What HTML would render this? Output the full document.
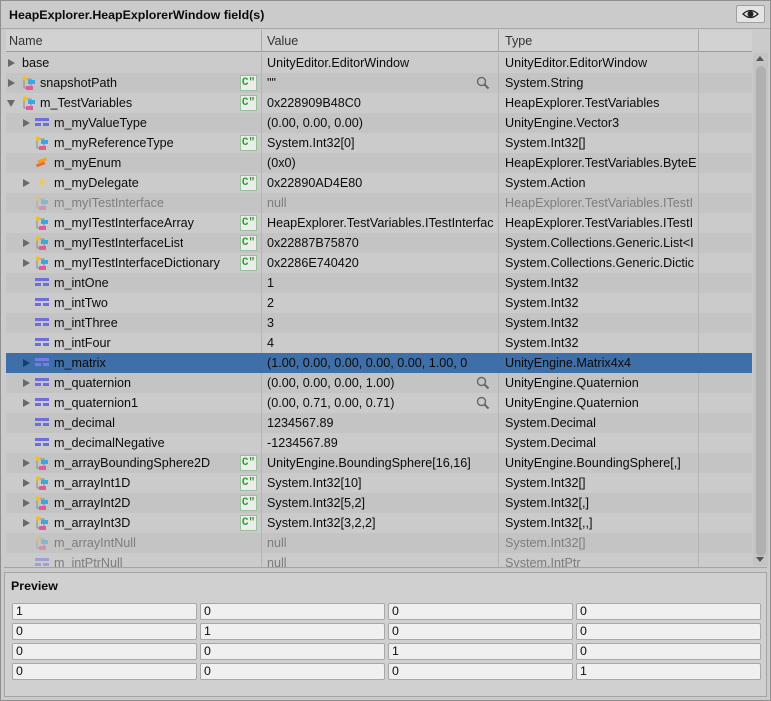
<!DOCTYPE html>
<html><head><meta charset="utf-8"><style>
*{box-sizing:border-box;margin:0;padding:0}
body{width:771px;height:701px;background:#c2c2c2;font-family:"Liberation Sans",sans-serif;font-size:12.6px;color:#0b0b0b;position:relative;overflow:hidden}
.abs{position:absolute}
#win{left:0;top:0;width:771px;height:701px;border:1px solid #8f8f8f;background:#cbcbcb}
#title{left:1px;top:1px;width:769px;height:28px;background:#cbcbcb;border-bottom:1px solid #a8a8a8}
#title span{position:absolute;left:8px;top:7px;font-weight:bold;font-size:12.4px}
#eye{left:736px;top:5px;width:29px;height:18px;background:#e4e4e4;border:1px solid #a0a0a0;border-radius:2px}
#hdr{left:6px;top:30px;width:746px;height:22px;background:#d2d2d2;border-bottom:1px solid #9a9a9a}
.hc{position:absolute;top:4px;color:#333}
.vl{position:absolute;top:0;width:1px;height:22px;background:#a8a8a8}
.row{position:absolute;left:6px;width:746px;height:20px;background:#cbcbcb}
.row.d{background:#c4c4c4}
.row.sel{background:#3e6fa8}
.row span{position:absolute;top:3px;white-space:nowrap;overflow:hidden}
.g{color:#7d7d7d}
.cl{position:absolute;top:0;width:1px;height:20px;background:#b5b5b5}
.arr{position:absolute;top:6px;width:0;height:0;border-left:7px solid #6a6a6a;border-top:4px solid transparent;border-bottom:4px solid transparent}
.dn{position:absolute;top:7px;width:0;height:0;border-top:7px solid #6a6a6a;border-left:4px solid transparent;border-right:4px solid transparent}
.ci{position:absolute;top:3px;width:14px;height:14px}
.btn{position:absolute;left:234px;top:2px;width:17px;height:16px;background:#ececec;border:1px solid #9bbf9b;color:#2c9e2c;font-weight:bold;font-size:11px;line-height:14px;text-align:center;font-family:"Liberation Mono",monospace}
.mag{position:absolute;left:470px;top:3px;width:14px;height:14px}
.val{left:261px;width:232px}.typ{left:499px;width:193px}
#sb{left:753px;top:53px;width:15px;height:513px;background:#c4c4c4}
#thumb{left:756px;top:66px;width:10px;height:490px;background:#b0b0b0;border-radius:5px}
#prev{left:4px;top:572px;width:763px;height:125px;background:#d0d0d0;border:1px solid #a4a4a4}
#prev b{position:absolute;left:6px;top:6px;font-size:12.4px}
.f{position:absolute;width:185px;height:17px;background:#f0f0f0;border:1px solid #a8a8a8;border-radius:2px;padding-left:3px;line-height:15px;font-size:12.4px}
</style></head><body>
<div id="win" class="abs"></div>
<div id="title" class="abs"><span>HeapExplorer.HeapExplorerWindow field(s)</span></div>
<div id="eye" class="abs"><svg width="27" height="16" viewBox="0 0 27 16"><path d="M6 8 Q13.5 1 21 8 Q13.5 15 6 8Z" fill="none" stroke="#222" stroke-width="1.3"/><circle cx="13.5" cy="8" r="3" fill="#222"/></svg></div>
<div id="hdr" class="abs"><span class="hc" style="left:3px">Name</span><div class="vl" style="left:255px"></div><span class="hc" style="left:261px">Value</span><div class="vl" style="left:492px"></div><span class="hc" style="left:499px">Type</span><div class="vl" style="left:692px"></div></div>

<div class="row" style="top:53px"><div class="arr" style="left:2px"></div><span style="left:16px">base</span><span class="val">UnityEditor.EditorWindow</span><span class="typ">UnityEditor.EditorWindow</span><div class="cl" style="left:255px"></div><div class="cl" style="left:492px"></div><div class="cl" style="left:692px"></div></div>
<div class="row d" style="top:73px"><div class="arr" style="left:2px"></div><svg class="ci" style="left:16px"><rect x="2" y="3" width="7" height="9" fill="none" stroke="#888" stroke-width="1"/><rect x="6" y="4" width="7" height="4" fill="#3aa7e0"/><rect x="4" y="10" width="7" height="4" fill="#e35a9a"/><circle cx="3" cy="2.5" r="2.3" fill="#f2c21b"/></svg><span style="left:34px">snapshotPath</span><div class="btn">C"</div><span class="val">""</span><svg class="mag" style="left:470px"><circle cx="5.5" cy="5.5" r="4" fill="none" stroke="#666" stroke-width="1.4"/><path d="M8.5 8.5 L12.5 12.5" stroke="#666" stroke-width="2"/></svg><span class="typ">System.String</span><div class="cl" style="left:255px"></div><div class="cl" style="left:492px"></div><div class="cl" style="left:692px"></div></div>
<div class="row" style="top:93px"><div class="dn" style="left:1px"></div><svg class="ci" style="left:16px"><rect x="2" y="3" width="7" height="9" fill="none" stroke="#888"/><rect x="6" y="4" width="7" height="4" fill="#3aa7e0"/><rect x="4" y="10" width="7" height="4" fill="#e35a9a"/><circle cx="3" cy="2.5" r="2.3" fill="#f2c21b"/></svg><span style="left:34px">m_TestVariables</span><div class="btn">C"</div><span class="val">0x228909B48C0</span><span class="typ">HeapExplorer.TestVariables</span><div class="cl" style="left:255px"></div><div class="cl" style="left:492px"></div><div class="cl" style="left:692px"></div></div>
<div class="row d" style="top:113px"><div class="arr" style="left:17px"></div><svg class="ci" style="left:29px"><rect x="0" y="2" width="14" height="3" fill="#6d6de0"/><rect x="0" y="7" width="6" height="3" fill="#6d6de0"/><rect x="8" y="7" width="6" height="3" fill="#6d6de0"/></svg><span style="left:48px">m_myValueType</span><span class="val">(0.00, 0.00, 0.00)</span><span class="typ">UnityEngine.Vector3</span><div class="cl" style="left:255px"></div><div class="cl" style="left:492px"></div><div class="cl" style="left:692px"></div></div>
<div class="row" style="top:133px"><svg class="ci" style="left:29px"><rect x="2" y="3" width="7" height="9" fill="none" stroke="#888"/><rect x="6" y="4" width="7" height="4" fill="#3aa7e0"/><rect x="4" y="10" width="7" height="4" fill="#e35a9a"/><circle cx="3" cy="2.5" r="2.3" fill="#f2c21b"/></svg><span style="left:48px">m_myReferenceType</span><div class="btn">C"</div><span class="val">System.Int32[0]</span><span class="typ">System.Int32[]</span><div class="cl" style="left:255px"></div><div class="cl" style="left:492px"></div><div class="cl" style="left:692px"></div></div>
<div class="row d" style="top:153px"><svg class="ci" style="left:29px"><rect x="3" y="3" width="9" height="3" fill="#f0a020" transform="rotate(-20 7 5)"/><rect x="1" y="7" width="9" height="3" fill="#e8702a" transform="rotate(-20 5 8)"/></svg><span style="left:48px">m_myEnum</span><span class="val">(0x0)</span><span class="typ">HeapExplorer.TestVariables.ByteE</span><div class="cl" style="left:255px"></div><div class="cl" style="left:492px"></div><div class="cl" style="left:692px"></div></div>
<div class="row" style="top:173px"><div class="arr" style="left:17px"></div><svg class="ci" style="left:29px"><path d="M7 1 L4 8 L7 8 L5 13 L10 6 L7 6 L9 1Z" fill="#f5c84a"/></svg><span style="left:48px">m_myDelegate</span><div class="btn">C"</div><span class="val">0x22890AD4E80</span><span class="typ">System.Action</span><div class="cl" style="left:255px"></div><div class="cl" style="left:492px"></div><div class="cl" style="left:692px"></div></div>
<div class="row d" style="top:193px"><svg class="ci" style="left:29px;opacity:.45"><rect x="2" y="3" width="7" height="9" fill="none" stroke="#888"/><rect x="6" y="4" width="7" height="4" fill="#3aa7e0"/><rect x="4" y="10" width="7" height="4" fill="#e35a9a"/><circle cx="3" cy="2.5" r="2.3" fill="#f2c21b"/></svg><span class="g" style="left:48px">m_myITestInterface</span><span class="val g">null</span><span class="typ g">HeapExplorer.TestVariables.ITestI</span><div class="cl" style="left:255px"></div><div class="cl" style="left:492px"></div><div class="cl" style="left:692px"></div></div>
<div class="row" style="top:213px"><svg class="ci" style="left:29px"><rect x="2" y="3" width="7" height="9" fill="none" stroke="#888"/><rect x="6" y="4" width="7" height="4" fill="#3aa7e0"/><rect x="4" y="10" width="7" height="4" fill="#e35a9a"/><circle cx="3" cy="2.5" r="2.3" fill="#f2c21b"/></svg><span style="left:48px">m_myITestInterfaceArray</span><div class="btn">C"</div><span class="val">HeapExplorer.TestVariables.ITestInterfac</span><span class="typ">HeapExplorer.TestVariables.ITestI</span><div class="cl" style="left:255px"></div><div class="cl" style="left:492px"></div><div class="cl" style="left:692px"></div></div>
<div class="row d" style="top:233px"><div class="arr" style="left:17px"></div><svg class="ci" style="left:29px"><rect x="2" y="3" width="7" height="9" fill="none" stroke="#888"/><rect x="6" y="4" width="7" height="4" fill="#3aa7e0"/><rect x="4" y="10" width="7" height="4" fill="#e35a9a"/><circle cx="3" cy="2.5" r="2.3" fill="#f2c21b"/></svg><span style="left:48px">m_myITestInterfaceList</span><div class="btn">C"</div><span class="val">0x22887B75870</span><span class="typ">System.Collections.Generic.List&lt;I</span><div class="cl" style="left:255px"></div><div class="cl" style="left:492px"></div><div class="cl" style="left:692px"></div></div>
<div class="row" style="top:253px"><div class="arr" style="left:17px"></div><svg class="ci" style="left:29px"><rect x="2" y="3" width="7" height="9" fill="none" stroke="#888"/><rect x="6" y="4" width="7" height="4" fill="#3aa7e0"/><rect x="4" y="10" width="7" height="4" fill="#e35a9a"/><circle cx="3" cy="2.5" r="2.3" fill="#f2c21b"/></svg><span style="left:48px">m_myITestInterfaceDictionary</span><div class="btn">C"</div><span class="val">0x2286E740420</span><span class="typ">System.Collections.Generic.Dictic</span><div class="cl" style="left:255px"></div><div class="cl" style="left:492px"></div><div class="cl" style="left:692px"></div></div>
<div class="row d" style="top:273px"><svg class="ci" style="left:29px"><rect x="0" y="2" width="14" height="3" fill="#6d6de0"/><rect x="0" y="7" width="6" height="3" fill="#6d6de0"/><rect x="8" y="7" width="6" height="3" fill="#6d6de0"/></svg><span style="left:48px">m_intOne</span><span class="val">1</span><span class="typ">System.Int32</span><div class="cl" style="left:255px"></div><div class="cl" style="left:492px"></div><div class="cl" style="left:692px"></div></div>
<div class="row" style="top:293px"><svg class="ci" style="left:29px"><rect x="0" y="2" width="14" height="3" fill="#6d6de0"/><rect x="0" y="7" width="6" height="3" fill="#6d6de0"/><rect x="8" y="7" width="6" height="3" fill="#6d6de0"/></svg><span style="left:48px">m_intTwo</span><span class="val">2</span><span class="typ">System.Int32</span><div class="cl" style="left:255px"></div><div class="cl" style="left:492px"></div><div class="cl" style="left:692px"></div></div>
<div class="row d" style="top:313px"><svg class="ci" style="left:29px"><rect x="0" y="2" width="14" height="3" fill="#6d6de0"/><rect x="0" y="7" width="6" height="3" fill="#6d6de0"/><rect x="8" y="7" width="6" height="3" fill="#6d6de0"/></svg><span style="left:48px">m_intThree</span><span class="val">3</span><span class="typ">System.Int32</span><div class="cl" style="left:255px"></div><div class="cl" style="left:492px"></div><div class="cl" style="left:692px"></div></div>
<div class="row" style="top:333px"><svg class="ci" style="left:29px"><rect x="0" y="2" width="14" height="3" fill="#6d6de0"/><rect x="0" y="7" width="6" height="3" fill="#6d6de0"/><rect x="8" y="7" width="6" height="3" fill="#6d6de0"/></svg><span style="left:48px">m_intFour</span><span class="val">4</span><span class="typ">System.Int32</span><div class="cl" style="left:255px"></div><div class="cl" style="left:492px"></div><div class="cl" style="left:692px"></div></div>
<div class="row sel" style="top:353px"><div class="arr" style="left:17px;border-left-color:#1d3e6a"></div><svg class="ci" style="left:29px"><rect x="0" y="2" width="14" height="3" fill="#7a7ae6"/><rect x="0" y="7" width="6" height="3" fill="#7a7ae6"/><rect x="8" y="7" width="6" height="3" fill="#7a7ae6"/></svg><span style="left:48px">m_matrix</span><span class="val">(1.00, 0.00, 0.00, 0.00, 0.00, 1.00, 0</span><span class="typ">UnityEngine.Matrix4x4</span></div>
<div class="row d" style="top:373px"><div class="arr" style="left:17px"></div><svg class="ci" style="left:29px"><rect x="0" y="2" width="14" height="3" fill="#6d6de0"/><rect x="0" y="7" width="6" height="3" fill="#6d6de0"/><rect x="8" y="7" width="6" height="3" fill="#6d6de0"/></svg><span style="left:48px">m_quaternion</span><span class="val">(0.00, 0.00, 0.00, 1.00)</span><svg class="mag"><circle cx="5.5" cy="5.5" r="4" fill="none" stroke="#666" stroke-width="1.4"/><path d="M8.5 8.5 L12.5 12.5" stroke="#666" stroke-width="2"/></svg><span class="typ">UnityEngine.Quaternion</span><div class="cl" style="left:255px"></div><div class="cl" style="left:492px"></div><div class="cl" style="left:692px"></div></div>
<div class="row" style="top:393px"><div class="arr" style="left:17px"></div><svg class="ci" style="left:29px"><rect x="0" y="2" width="14" height="3" fill="#6d6de0"/><rect x="0" y="7" width="6" height="3" fill="#6d6de0"/><rect x="8" y="7" width="6" height="3" fill="#6d6de0"/></svg><span style="left:48px">m_quaternion1</span><span class="val">(0.00, 0.71, 0.00, 0.71)</span><svg class="mag"><circle cx="5.5" cy="5.5" r="4" fill="none" stroke="#666" stroke-width="1.4"/><path d="M8.5 8.5 L12.5 12.5" stroke="#666" stroke-width="2"/></svg><span class="typ">UnityEngine.Quaternion</span><div class="cl" style="left:255px"></div><div class="cl" style="left:492px"></div><div class="cl" style="left:692px"></div></div>
<div class="row d" style="top:413px"><svg class="ci" style="left:29px"><rect x="0" y="2" width="14" height="3" fill="#6d6de0"/><rect x="0" y="7" width="6" height="3" fill="#6d6de0"/><rect x="8" y="7" width="6" height="3" fill="#6d6de0"/></svg><span style="left:48px">m_decimal</span><span class="val">1234567.89</span><span class="typ">System.Decimal</span><div class="cl" style="left:255px"></div><div class="cl" style="left:492px"></div><div class="cl" style="left:692px"></div></div>
<div class="row" style="top:433px"><svg class="ci" style="left:29px"><rect x="0" y="2" width="14" height="3" fill="#6d6de0"/><rect x="0" y="7" width="6" height="3" fill="#6d6de0"/><rect x="8" y="7" width="6" height="3" fill="#6d6de0"/></svg><span style="left:48px">m_decimalNegative</span><span class="val">-1234567.89</span><span class="typ">System.Decimal</span><div class="cl" style="left:255px"></div><div class="cl" style="left:492px"></div><div class="cl" style="left:692px"></div></div>
<div class="row d" style="top:453px"><div class="arr" style="left:17px"></div><svg class="ci" style="left:29px"><rect x="2" y="3" width="7" height="9" fill="none" stroke="#888"/><rect x="6" y="4" width="7" height="4" fill="#3aa7e0"/><rect x="4" y="10" width="7" height="4" fill="#e35a9a"/><circle cx="3" cy="2.5" r="2.3" fill="#f2c21b"/></svg><span style="left:48px">m_arrayBoundingSphere2D</span><div class="btn">C"</div><span class="val">UnityEngine.BoundingSphere[16,16]</span><span class="typ">UnityEngine.BoundingSphere[,]</span><div class="cl" style="left:255px"></div><div class="cl" style="left:492px"></div><div class="cl" style="left:692px"></div></div>
<div class="row" style="top:473px"><div class="arr" style="left:17px"></div><svg class="ci" style="left:29px"><rect x="2" y="3" width="7" height="9" fill="none" stroke="#888"/><rect x="6" y="4" width="7" height="4" fill="#3aa7e0"/><rect x="4" y="10" width="7" height="4" fill="#e35a9a"/><circle cx="3" cy="2.5" r="2.3" fill="#f2c21b"/></svg><span style="left:48px">m_arrayInt1D</span><div class="btn">C"</div><span class="val">System.Int32[10]</span><span class="typ">System.Int32[]</span><div class="cl" style="left:255px"></div><div class="cl" style="left:492px"></div><div class="cl" style="left:692px"></div></div>
<div class="row d" style="top:493px"><div class="arr" style="left:17px"></div><svg class="ci" style="left:29px"><rect x="2" y="3" width="7" height="9" fill="none" stroke="#888"/><rect x="6" y="4" width="7" height="4" fill="#3aa7e0"/><rect x="4" y="10" width="7" height="4" fill="#e35a9a"/><circle cx="3" cy="2.5" r="2.3" fill="#f2c21b"/></svg><span style="left:48px">m_arrayInt2D</span><div class="btn">C"</div><span class="val">System.Int32[5,2]</span><span class="typ">System.Int32[,]</span><div class="cl" style="left:255px"></div><div class="cl" style="left:492px"></div><div class="cl" style="left:692px"></div></div>
<div class="row" style="top:513px"><div class="arr" style="left:17px"></div><svg class="ci" style="left:29px"><rect x="2" y="3" width="7" height="9" fill="none" stroke="#888"/><rect x="6" y="4" width="7" height="4" fill="#3aa7e0"/><rect x="4" y="10" width="7" height="4" fill="#e35a9a"/><circle cx="3" cy="2.5" r="2.3" fill="#f2c21b"/></svg><span style="left:48px">m_arrayInt3D</span><div class="btn">C"</div><span class="val">System.Int32[3,2,2]</span><span class="typ">System.Int32[,,]</span><div class="cl" style="left:255px"></div><div class="cl" style="left:492px"></div><div class="cl" style="left:692px"></div></div>
<div class="row d" style="top:533px"><svg class="ci" style="left:29px;opacity:.45"><rect x="2" y="3" width="7" height="9" fill="none" stroke="#888"/><rect x="6" y="4" width="7" height="4" fill="#3aa7e0"/><rect x="4" y="10" width="7" height="4" fill="#e35a9a"/><circle cx="3" cy="2.5" r="2.3" fill="#f2c21b"/></svg><span class="g" style="left:48px">m_arrayIntNull</span><span class="val g">null</span><span class="typ g">System.Int32[]</span><div class="cl" style="left:255px"></div><div class="cl" style="left:492px"></div><div class="cl" style="left:692px"></div></div>
<div class="row" style="top:553px;height:14px;overflow:hidden"><svg class="ci" style="left:29px;opacity:.45"><rect x="0" y="2" width="14" height="3" fill="#6d6de0"/><rect x="0" y="7" width="6" height="3" fill="#6d6de0"/><rect x="8" y="7" width="6" height="3" fill="#6d6de0"/></svg><span class="g" style="left:48px">m_intPtrNull</span><span class="val g">null</span><span class="typ g">System.IntPtr</span><div class="cl" style="left:255px"></div><div class="cl" style="left:492px"></div><div class="cl" style="left:692px"></div></div>

<div id="sb" class="abs"></div>
<div id="thumb" class="abs"></div>
<div class="abs" style="left:756px;top:56px;width:0;height:0;border-bottom:5px solid #555;border-left:4px solid transparent;border-right:4px solid transparent"></div>
<div class="abs" style="left:756px;top:557px;width:0;height:0;border-top:5px solid #555;border-left:4px solid transparent;border-right:4px solid transparent"></div>
<div class="abs" style="left:4px;top:567px;width:763px;height:1px;background:#a4a4a4"></div>

<div id="prev" class="abs"><b>Preview</b>
<div class="f" style="left:7px;top:30px">1</div><div class="f" style="left:195px;top:30px">0</div><div class="f" style="left:383px;top:30px">0</div><div class="f" style="left:571px;top:30px">0</div>
<div class="f" style="left:7px;top:50px">0</div><div class="f" style="left:195px;top:50px">1</div><div class="f" style="left:383px;top:50px">0</div><div class="f" style="left:571px;top:50px">0</div>
<div class="f" style="left:7px;top:70px">0</div><div class="f" style="left:195px;top:70px">0</div><div class="f" style="left:383px;top:70px">1</div><div class="f" style="left:571px;top:70px">0</div>
<div class="f" style="left:7px;top:90px">0</div><div class="f" style="left:195px;top:90px">0</div><div class="f" style="left:383px;top:90px">0</div><div class="f" style="left:571px;top:90px">1</div>
</div>
</body></html>
